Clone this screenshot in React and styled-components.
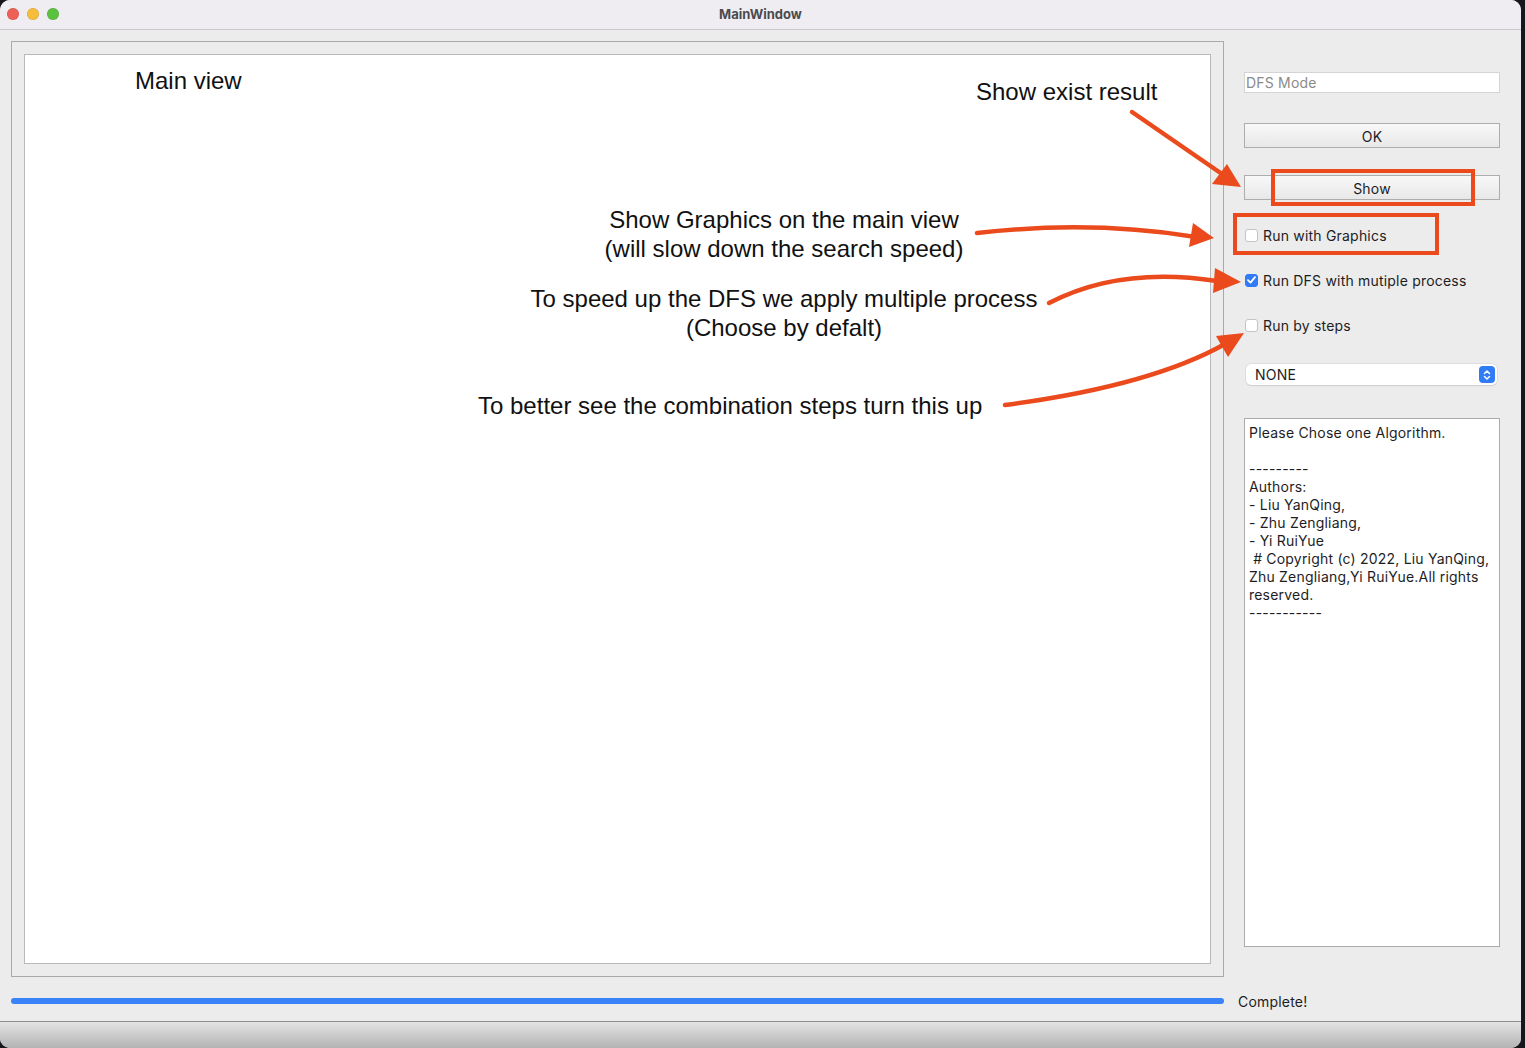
import React from 'react'
import styled, { createGlobalStyle } from 'styled-components'

const GlobalStyle = createGlobalStyle`
  html, body {
    margin: 0;
    padding: 0;
    background: #17161d;
  }
  body {
    font-family: Inter, "Liberation Sans", sans-serif;
  }
`

const ACCENT = '#ea4a1c'

const Page = styled.div`
  width: 1525px;
  height: 1048px;
  overflow: hidden;
  background: #17161d;
`

const Window = styled.div`
  position: relative;
  width: 1521px;
  height: 1048px;
  display: flex;
  flex-direction: column;
  background: #ececec;
  border-radius: 10px;
  overflow: hidden;
`

const TitleBar = styled.div`
  height: 29px;
  flex-shrink: 0;
  display: grid;
  grid-template-columns: 1fr auto 1fr;
  align-items: center;
  background: #efedf2;
  border-bottom: 1px solid #c8c7cb;
`

const Lights = styled.div`
  display: flex;
  gap: 8px;
  padding: 0 0 1px 7px;
`

const Light = styled.span`
  width: 12px;
  height: 12px;
  border-radius: 50%;
  background: ${p => p.color};
  box-shadow: inset 0 0 0 0.5px rgba(0, 0, 0, 0.15);
`

const Title = styled.div`
  font-size: 13px;
  font-weight: 700;
  color: #4b4a4f;
  padding-bottom: 1px;
`

const Body = styled.div`
  display: flex;
  align-items: flex-start;
  padding: 11px 0 0 11px;
`

const MainFrame = styled.div`
  box-sizing: border-box;
  width: 1213px;
  height: 936px;
  padding: 12px;
  border: 1px solid #a9a9a9;
`

const Canvas = styled.div`
  position: relative;
  box-sizing: border-box;
  height: 100%;
  background: #fff;
  border: 1px solid #b9b9b9;
  font-family: "Liberation Sans", Arial, sans-serif;
  color: #111;
`

const Note = styled.div`
  position: absolute;
  left: ${p => p.x}px;
  top: ${p => p.y}px;
  font-size: 24px;
  line-height: 29px;
  white-space: nowrap;
  text-align: center;
  transform: ${p => (p.center ? 'translateX(-50%)' : 'none')};
`

const SidePanel = styled.div`
  width: 256px;
  margin-left: 20px;
  display: flex;
  flex-direction: column;
  font-size: 14px;
  letter-spacing: 0.2px;
  color: #1d1d1f;
`

const Field = styled.div`
  box-sizing: border-box;
  height: 21px;
  margin-top: 31px;
  padding-left: 1px;
  display: flex;
  align-items: center;
  background: #fff;
  border: 1px solid #d4d4d4;
  color: #8b8b8b;
`

const Button = styled.div`
  box-sizing: border-box;
  height: 25px;
  margin-top: ${p => p.gap}px;
  display: flex;
  align-items: center;
  justify-content: center;
  padding-top: 1px;
  background: linear-gradient(#f8f8f8, #e8e8e8);
  border: 1px solid #adadad;
  color: #1d1d1f;
`

const CheckRow = styled.label`
  height: 20px;
  margin-top: 25px;
  display: flex;
  align-items: center;
  gap: 5px;
  padding-left: 1px;
`

const Box = styled.span`
  box-sizing: border-box;
  width: 13px;
  height: 13px;
  border-radius: 3px;
  display: flex;
  align-items: center;
  justify-content: center;
  background: ${p => (p.checked ? '#2f7cf6' : '#fff')};
  border: 1px solid ${p => (p.checked ? '#2f7cf6' : '#c4c4c4')};
`

const Combo = styled.div`
  box-sizing: border-box;
  height: 21px;
  margin: 29px 3px 0 2px;
  padding: 0 2px 0 9px;
  display: flex;
  align-items: center;
  justify-content: space-between;
  background: #fff;
  border-radius: 5px;
  box-shadow: 0 0 0 0.5px #cfcfcf, 0 1px 1px rgba(0, 0, 0, 0.12);
`

const Stepper = styled.span`
  width: 16px;
  height: 17px;
  border-radius: 4px;
  background: #2f7cf6;
  display: flex;
  align-items: center;
  justify-content: center;
`

const Info = styled.div`
  box-sizing: border-box;
  height: 529px;
  margin-top: 33px;
  padding: 5px 4px;
  background: #fff;
  border: 1px solid #ababab;
  line-height: 18px;
  white-space: pre-wrap;
`

const StatusRow = styled.div`
  height: 44px;
  padding: 4px 0 0 11px;
  box-sizing: border-box;
  display: flex;
  align-items: center;
  font-size: 14px;
  letter-spacing: 0.2px;
  color: #1d1d1f;
`

const Progress = styled.div`
  width: 1213px;
  height: 6px;
  border-radius: 3px;
  background: #3a82f7;
`

const StatusText = styled.span`
  margin-left: 14px;
`

const BottomBar = styled.div`
  flex: 1;
  border-top: 1px solid #8d8d8d;
  background: linear-gradient(#e4e4e4, #b3b3b3);
`

const Overlay = styled.svg`
  position: absolute;
  left: 0;
  top: 0;
  pointer-events: none;
`

const Check = () => (
  <svg width="9" height="8" viewBox="0 0 9 8">
    <path d="M1 4.2 L3.5 6.6 L8 1.2" fill="none" stroke="#fff" strokeWidth="1.8" strokeLinecap="round" strokeLinejoin="round" />
  </svg>
)

const Chevrons = () => (
  <svg width="8" height="12" viewBox="0 0 8 12">
    <path d="M1.5 4.5 L4 2 L6.5 4.5 M1.5 7.5 L4 10 L6.5 7.5" fill="none" stroke="#fff" strokeWidth="1.5" strokeLinecap="round" strokeLinejoin="round" />
  </svg>
)

const info = `Please Chose one Algorithm.

---------
Authors:
- Liu YanQing,
- Zhu Zengliang,
- Yi RuiYue
 # Copyright (c) 2022, Liu YanQing,
Zhu Zengliang,Yi RuiYue.All rights
reserved.
-----------`

const arrows = [
  { d: 'M1132 112 L1222 174', head: '1241,187 1227,164 1212,184' },
  { d: 'M977 233 Q1090 220 1196 237', head: '1214,238 1193,223 1189,247' },
  { d: 'M1049 303 Q1120 266 1217 281', head: '1241,282 1215,268 1213,293' },
  { d: 'M1005 405 Q1150 386 1225 344', head: '1244,333 1216,336 1228,357' },
]

export default function App() {
  return (
    <Page>
      <GlobalStyle />
      <Window>
        <TitleBar>
          <Lights>
            <Light color="#ee5f56" />
            <Light color="#f6bd3d" />
            <Light color="#5ac23f" />
          </Lights>
          <Title>MainWindow</Title>
          <span />
        </TitleBar>

        <Body>
          <MainFrame>
            <Canvas>
              <Note x={110} y={11}>Main view</Note>
              <Note x={951} y={22}>Show exist result</Note>
              <Note x={759} y={150} center>
                Show Graphics on the main view
                <br />
                (will slow down the search speed)
              </Note>
              <Note x={759} y={229} center>
                To speed up the DFS we apply multiple process
                <br />
                (Choose by defalt)
              </Note>
              <Note x={453} y={336}>To better see the combination steps turn this up</Note>
            </Canvas>
          </MainFrame>

          <SidePanel>
            <Field>DFS Mode</Field>
            <Button gap={30}>OK</Button>
            <Button gap={27}>Show</Button>
            <CheckRow>
              <Box />
              Run with Graphics
            </CheckRow>
            <CheckRow>
              <Box checked>
                <Check />
              </Box>
              Run DFS with mutiple process
            </CheckRow>
            <CheckRow>
              <Box />
              Run by steps
            </CheckRow>
            <Combo>
              NONE
              <Stepper>
                <Chevrons />
              </Stepper>
            </Combo>
            <Info>{info}</Info>
          </SidePanel>
        </Body>

        <StatusRow>
          <Progress />
          <StatusText>Complete!</StatusText>
        </StatusRow>
        <BottomBar />

        <Overlay width="1521" height="1048">
          <rect x="1273" y="171" width="200" height="33" fill="none" stroke={ACCENT} strokeWidth="4" />
          <rect x="1235" y="215" width="202" height="38" fill="none" stroke={ACCENT} strokeWidth="4" />
          {arrows.map((a, i) => (
            <g key={i}>
              <path d={a.d} fill="none" stroke={ACCENT} strokeWidth="4.5" strokeLinecap="round" />
              <polygon points={a.head} fill={ACCENT} />
            </g>
          ))}
        </Overlay>
      </Window>
    </Page>
  )
}
